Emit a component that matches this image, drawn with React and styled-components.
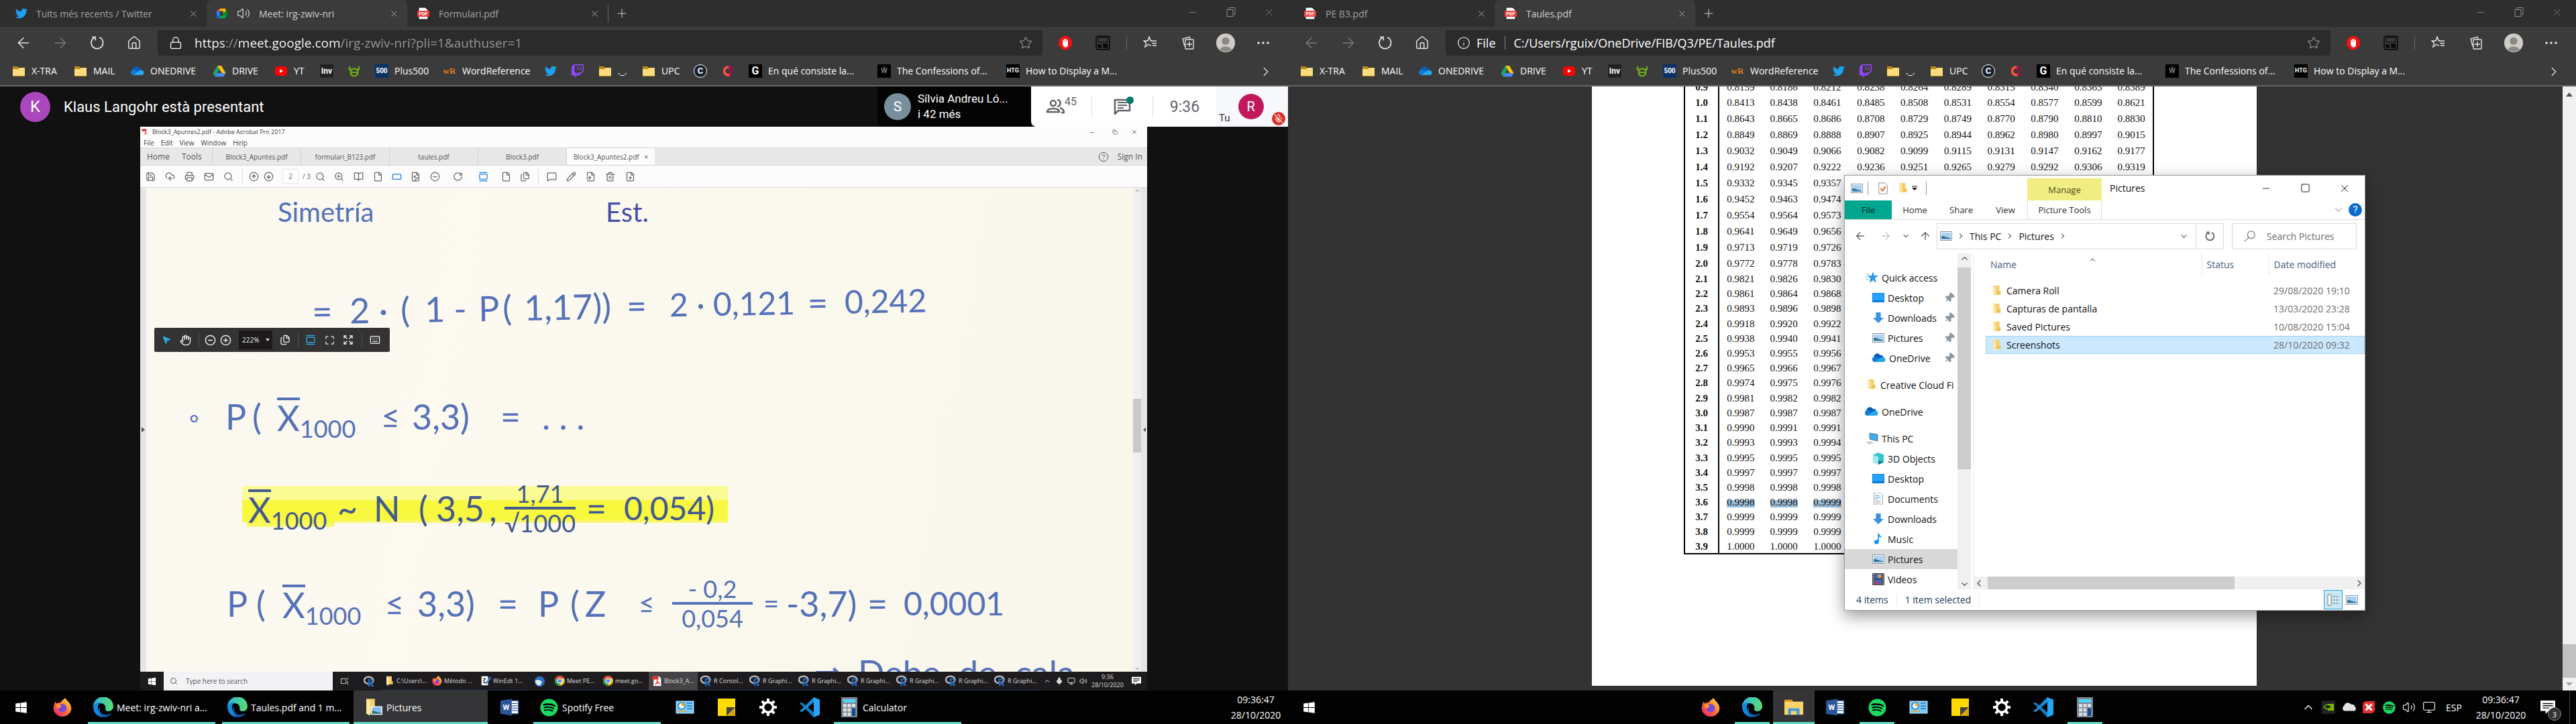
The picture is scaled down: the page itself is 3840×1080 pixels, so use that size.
import React from "react";
import styled, { createGlobalStyle, css } from "styled-components";
import {
  ArrowLeft, ArrowRight, ArrowUp, House, Lock, Star, Settings, Search, Volume2, Minus, X, Plus,
  Square, Copy, ChevronRight, ChevronDown, ChevronUp, ChevronLeft, Info, Pin, Monitor, Printer, Mail, Hand,
  Trash2, File, Maximize, MousePointer2, Mic, MicOff, MessageSquare, RotateCw, Save, CloudUpload,
  CircleArrowUp, CircleArrowDown, CirclePlus, CircleMinus, ZoomIn, Pencil, FileInput, FilePlus, BookOpen,
  Files, Expand, Keyboard, Ellipsis, GalleryVertical, RectangleHorizontal, FileImage, CircleHelp,
} from "lucide-react";
import { FaTwitter, FaTwitch, FaSpotify, FaWindows } from "react-icons/fa";

const ui = `"Open Sans", "Noto Sans", sans-serif`;
const meet = `Roboto, "Liberation Sans", sans-serif`;
const serif = `"Liberation Serif", serif`;
const pen = `Lato, "Open Sans", sans-serif`;

const Global = createGlobalStyle`
  *, *::before, *::after { box-sizing: border-box; }
  body { margin: 0; background: #000; font-family: ${ui}; }
  button, input, select { font: inherit; color: inherit; border: 0; background: none; padding: 0; margin: 0; outline: 0; }
  svg { display: block; flex: none; }
`;

/* ---------- icons ---------- */

const Svg = ({ w = 20, h = w, vb = "0 0 20 20", children }) => (
  <svg width={w} height={h} viewBox={vb} fill="none" aria-hidden="true">{children}</svg>
);

const FolderYellow = () => (
  <Svg>
    <path d="M1 3h7l2 2h9v13H1z" fill="#b98a12" />
    <path d="M1 7h8l2-2h8v12H1z" fill="#fedb7c" />
  </Svg>
);
const FolderTall = ({ s = 18 }) => (
  <Svg w={s}>
    <path d="M5 1h10v15H5z" fill="#f6cf69" />
    <path d="M5 1l4 3v15l-4-3z" fill="#ffe9a8" />
    <path d="M9 16h8V10h-2z" fill="#efc04a" />
  </Svg>
);
const OneDriveIcon = () => (
  <Svg>
    <path d="M3 11a5 5 0 0 1 9-5 4 4 0 0 1 5 4l-7 4z" fill="#0a5fb8" />
    <path d="M4 16a4 4 0 0 1 0-8c2 0 4 1 6 3l5 5z" fill="#1479d4" />
    <path d="M8 16l-4-.2 7-5.300A5 5 0 0 1 16 9a3.500 3.500 0 0 1 0 7z" fill="#29a6ea" />
  </Svg>
);
const DriveIcon = () => (
  <Svg>
    <path d="M7 2h6l6.500 11H13.500z" fill="#ffc107" />
    <path d="M7 2l3 5.200L3.500 18.500 .5 13z" fill="#1da362" />
    <path d="M6.500 13h13l-3 5.500h-13z" fill="#4688f4" />
  </Svg>
);
const YouTubeIcon = () => (
  <Svg>
    <rect x="1" y="3" width="18" height="14" rx="4" fill="#f00" />
    <path d="M8 7l5 3-5 3z" fill="#fff" />
  </Svg>
);
const MeetIcon = () => (
  <Svg w={18}>
    <path d="M6 2h9a1 1 0 0 1 1 1v4l-4 3V6H6z" fill="#ffba00" />
    <path d="M6 2v4H1z" fill="#e94235" />
    <path d="M1 6h5v8H1z" fill="#2684fc" />
    <path d="M1 14h5v4H2a1 1 0 0 1-1-1z" fill="#0066da" />
    <path d="M6 14h6v-4l4 3v4a1 1 0 0 1-1 1H6z" fill="#00ac47" />
    <path d="M12 10l7-6v12z" fill="#00832d" />
  </Svg>
);
const LetterBox = styled.span`
  display: grid;
  place-items: center;
  flex: none;
  width: ${(p) => p.$s || 20}px;
  height: ${(p) => p.$s || 20}px;
  border-radius: ${(p) => p.$r || 0}px;
  background: ${(p) => p.$bg || "transparent"};
  border: ${(p) => p.$bd || "0"};
  color: ${(p) => p.$fg || "#fff"};
  font: ${(p) => p.$w || 700} ${(p) => p.$fs || 12}px/1 ${(p) => p.$ff || meet};
`;
const PdfIcon = ({ s = 20 }) => (
  <Svg w={s} h={s}>
    <path d="M3 1h10l4 4v14H3z" fill="#fff" stroke="#111" />
    <rect x="1" y="6" width="18" height="9" rx="1" fill="#ee3e3e" />
    <text x="10" y="13" fill="#fff" fontFamily="Roboto, sans-serif" fontWeight="700" fontSize="7" textAnchor="middle">PDF</text>
  </Svg>
);
const AcrobatIcon = ({ s = 16 }) => (
  <Svg w={s} h={s}>
    <path d="M4 1h10l4 4v14H4z" fill="#fff" />
    <rect x="1" y="1" width="12" height="6" fill="#d8332a" />
    <path d="M10 8c1 4 3 6 6 7M11 8c0 4-2 7-4 9M8 14c2-1 5-1 7-1" stroke="#d8332a" strokeWidth="1.400" />
  </Svg>
);
const HornsIcon = () => (
  <Svg>
    <circle cx="10" cy="12" r="5.500" stroke="#6aa516" strokeWidth="2.500" />
    <path d="M5 12h10" stroke="#6aa516" strokeWidth="2" />
    <path d="M4 1c-4 4-3 8 1 9l1-3C4 6 3 4 4 1zM16 1c4 4 3 8-1 9l-1-3c2-1 3-3 2-6z" fill="#6aa516" />
  </Svg>
);
const RingC = () => (
  <Svg>
    <path d="M16 4a8 8 0 1 0 0 12l-3-3a4 4 0 1 1 0-6z" fill="#ff4f3c" />
    <path d="M10 2a8 8 0 0 1 7 3v9a8 8 0 0 1-5 4l1-5V7z" fill="#8d1248" />
  </Svg>
);
const BlockIcon = () => (
  <Svg w={20}>
    <path d="M6 0h8l6 6v8l-6 6H6l-6-6V6z" fill="#e11" />
    <path d="M6 9V5.500h1.600V9h.4V4h1.600v5h.4V4h1.600v5h.4V5.500H14V12c0 3-1 4.500-3.500 4.500S7 15 6 12z" fill="#fff" />
  </Svg>
);
const PipIcon = () => (
  <Svg w={22}>
    <rect x="1" y="1" width="18" height="18" rx="2" stroke="#0a0a0a" strokeWidth="1.500" />
    <rect x="4" y="3" width="12" height="6" stroke="#0a0a0a" />
    <rect x="3" y="12" width="5" height="5" fill="#0a0a0a" />
    <rect x="10" y="11" width="7" height="6" fill="#0a0a0a" />
  </Svg>
);
const FavIcon = () => (
  <Svg w={22} vb="0 0 22 22">
    <path d="M12 15.500L8 13l-5 4 1.500-6L1 8h6l2-6 2.500 6H20M13 11.500h7M14 15h6" stroke="#e8e8e8" strokeWidth="1.400" />
  </Svg>
);
const CollectionsIcon = () => (
  <Svg w={22} vb="0 0 22 22">
    <path d="M6 16l-3-11 10-3 1 3" stroke="#e8e8e8" strokeWidth="1.400" />
    <rect x="7" y="6" width="12" height="14" rx="1" stroke="#e8e8e8" strokeWidth="1.400" />
    <path d="M13 9v8M9 13h8" stroke="#e8e8e8" strokeWidth="1.400" />
  </Svg>
);
const ReloadIcon = ({ c = "#e8e8e8", s = 22, sw = 1.5 }) => (
  <Svg w={s}>
    <path d="M13 2.500a8 8 0 1 1-7 .3" stroke={c} strokeWidth={sw} />
    <path d="M3 2h4.500v4.500" stroke={c} strokeWidth={sw} />
  </Svg>
);
const PersonIcon = () => (
  <Svg w={28}>
    <circle cx="10" cy="10" r="10" fill="#d0cdc9" />
    <circle cx="10" cy="8" r="4" fill="#8d8883" />
    <path d="M3.500 17a7 5 0 0 1 13 0 10 10 0 0 1-13 0z" fill="#8d8883" />
  </Svg>
);
const EdgeIcon = ({ s = 30 }) => (
  <Svg w={s}>
    <defs>
      <linearGradient id="edgeTop" x1="0" x2="1"><stop stopColor="#2bb3e6" /><stop offset="1" stopColor="#5be06b" /></linearGradient>
      <linearGradient id="edgeLow" x1="0" y1="0" x2="0" y2="1"><stop stopColor="#1b8fe0" /><stop offset="1" stopColor="#0c4f9e" /></linearGradient>
    </defs>
    <path d="M0 10a10 10 0 0 1 20-1c0 3-2 5-5 5-2 0-3-1-3-2 1-3-1-6-5-6-4 0-6 2-7 4z" fill="url(#edgeTop)" />
    <path d="M0 10c0-3 3-5 7-5-2 2-3 4-2 8 1 4 4 6 7 6.700A10 10 0 0 1 0 10z" fill="#1488dd" />
    <path d="M7 9c-2 4 0 8 5 8.500 3 0 5-1 6.500-2A10 10 0 0 1 9 19.900C5 17 4 12 7 9z" fill="url(#edgeLow)" />
  </Svg>
);
const FirefoxIcon = ({ s = 28 }) => (
  <Svg w={s}>
    <defs><linearGradient id="fox" x1="1" y1="0" x2="0" y2="1"><stop stopColor="#fff44f" /><stop offset=".45" stopColor="#ff7a2a" /><stop offset="1" stopColor="#f0137a" /></linearGradient></defs>
    <path d="M13 0c1 3 6 5 6.500 11A9.500 9 0 0 1 .5 11C.5 8 2 6 2 4l2 2c1-1 3-1 4-1 1-2 3-3 5-5z" fill="url(#fox)" />
    <circle cx="10" cy="11" r="4.500" fill="#7a46e0" />
    <path d="M3 7c3-1 5 0 6 2l-4 3z" fill="#ff9a2c" />
  </Svg>
);
const WordIcon = () => (
  <Svg w={28}>
    <rect x="9" y="3" width="10" height="14" fill="#fff" stroke="#2b579a" />
    <path d="M12 6h6M12 8.500h6M12 11h6M12 13.500h6" stroke="#2b579a" />
    <path d="M0 3l12-2v18L0 17z" fill="#2b579a" />
    <text x="6" y="13" fill="#fff" fontFamily="Roboto, sans-serif" fontWeight="700" fontSize="8" textAnchor="middle">W</text>
  </Svg>
);
const PanelIcon = () => (
  <Svg w={28} h={20} vb="0 0 28 20">
    <rect x="1" y="1" width="26" height="18" fill="#7cc9f7" stroke="#b9e4ff" />
    <circle cx="9" cy="8" r="5" fill="#e8f6ff" stroke="#1b78c4" strokeWidth="1.500" />
    <path d="M9 8V3a5 5 0 0 1 5 5z" fill="#f6a623" />
    <path d="M17 4h8M17 8h8M17 12h8" stroke="#1b78c4" strokeWidth="1.500" />
    <path d="M4 16h12" stroke="#f6a623" strokeWidth="1.500" />
  </Svg>
);
const StickyIcon = () => (
  <Svg w={26}>
    <path d="M0 0h20v20H0z" fill="#ffd900" />
    <path d="M10 20V10h10z" fill="#444" />
    <path d="M11 20l9-10v10z" fill="#d9a400" />
  </Svg>
);
const GearIcon = () => (
  <Svg w={28} vb="-14 -14 28 28">
    <circle r="7.500" stroke="#fff" strokeWidth="3.500" />
    {[0, 45, 90, 135, 180, 225, 270, 315].map((a) => <rect key={a} x="-2" y="-13" width="4" height="5" fill="#fff" transform={`rotate(${a})`} />)}
  </Svg>
);
const CodeIcon = () => (
  <Svg w={30}>
    <path d="M14 0l6 2.500v15L14 20z" fill="#25a5f2" />
    <path d="M0 6.500L2 5l12 10v5L2 7.800z" fill="#1479c4" />
    <path d="M0 13.500L2 15 14 5V0L2 12.200z" fill="#1a8ad6" />
  </Svg>
);
const CalcIcon = () => (
  <Svg w={24} h={30} vb="0 0 24 30">
    <rect width="24" height="30" rx="1" fill="#7c8792" />
    <rect x="3" y="3" width="18" height="5" fill="#4fd4f7" />
    <path d="M3 10h5v5H3zM9.500 10h5v5h-5zM16 10h5v5h-5zM3 16.500h5v5H3zM9.500 16.500h5v5h-5zM3 23h5v5H3zM9.500 23h5v5h-5z" fill="#d9dee3" />
    <path d="M16 16.500h5V28h-5z" fill="#0f4c93" />
  </Svg>
);
const ExplorerIcon = () => (
  <Svg w={28}>
    <path d="M0 2h8l2 3H0z" fill="#dd9a14" />
    <path d="M0 4h20v14H0z" fill="#fbd36a" />
    <path d="M4 18v-7h12v7h-3v-4H7v4z" fill="#3f9ade" />
  </Svg>
);
const PhotoIcon = ({ w = 18, h = 14 }) => (
  <Svg w={w} h={h} vb="0 0 18 14">
    <rect x=".5" y=".5" width="17" height="13" fill="#fff" stroke="#8d9499" />
    <path d="M2 2h14v10H2z" fill="#a9d0f5" />
    <path d="M2 7c5 0 8 3 14 3v2H2z" fill="#2e6f71" />
    <path d="M2 10h14v2H2z" fill="#4a8fd0" />
  </Svg>
);
const FolderPhotoIcon = () => (
  <Svg w={28}>
    <path d="M3 1h9v16H3z" fill="#f6cf69" /><path d="M3 1l4 2v16l-4-2z" fill="#ffe9a8" />
    <rect x="8" y="9" width="12" height="9" fill="#fff" /><path d="M9 10h10v7H9z" fill="#7dbcf0" /><path d="M9 14c4 0 6 2 10 2v1H9z" fill="#2e6f71" />
  </Svg>
);
const QuickStar = () => (
  <Svg w={20}>
    <path d="M12 1l2 6h6l-5 4 2 7-5-4-5 4 1-7-4-4h6z" fill="#2f9be8" />
    <path d="M1 5h6M0 9h5M1 13h5" stroke="#7cc4f5" />
  </Svg>
);
const DesktopIcon = () => <Svg w={18} h={14} vb="0 0 18 14"><rect width="18" height="14" fill="#0a7bd6" /><rect x="1" y="1" width="16" height="10" fill="#27a3ff" /></Svg>;
const DownIcon = () => <Svg w={18}><path d="M6 1h8v9h5l-9 9-9-9h5z" fill="#3a93e2" /></Svg>;
const PcIcon = () => <Svg w={20}><path d="M7 2l12 2v10L7 11z" fill="#3faaf0" stroke="#6b7a85" /><path d="M1 15l8-1 4 3-7 2z" fill="#c9d1d8" /></Svg>;
const CubeIcon = () => <Svg w={18}><path d="M10 0l9 4v12l-9 4-9-4V4z" fill="#37c2cf" /><path d="M1 4l9 3v13l-9-4z" fill="#a5e8ee" /><path d="M10 13l9 3-9 4z" fill="#117c8a" /></Svg>;
const DocIcon = () => <Svg w={18}><path d="M3 0h10l4 4v16H3z" fill="#fff" stroke="#8d9499" /><path d="M5 5h6M5 8h9M5 11h4" stroke="#1f8fe0" /><path d="M5 14h9M5 17h9" stroke="#999" /></Svg>;
const EditDocIcon = () => <Svg w={15}><path d="M1 1h13v18H1z" fill="#fff" /><path d="M4 6h5l-4 4 4 4H4" stroke="#333" strokeWidth="1.500" /><path d="M18 2l-8 11-1 4 4-2 7-11z" fill="#3b8fe0" /></Svg>;
const MusicIcon = () => <Svg w={18}><path d="M10 0c1 4 6 4 5 9-1-2-2-3-4-3v9a4 3.500 0 1 1-2-3V0z" fill="#1597ee" /></Svg>;
const VideoIcon = () => <Svg w={18}><path d="M0 0h20v20H0z" fill="#444" /><path d="M4 1h12v8H4z" fill="#3d67c9" /><path d="M4 11h12v8H4z" fill="#3d67c9" /><circle cx="12" cy="5" r="3" fill="#e9a523" /><path d="M5 15h6v4H5z" fill="#d34" /><path d="M2 1v18M18 1v18" stroke="#ddd" strokeDasharray="2 2" strokeWidth="1.500" /></Svg>;
const ChromeIcon = () => <Svg w={15}><circle cx="10" cy="10" r="10" fill="#f3c02b" /><path d="M1.300 5A10 10 0 0 1 18.700 5L10 6 6 12z" fill="#dd4b3e" /><path d="M1.300 5A10 10 0 0 0 9 20l4-7-7-1z" fill="#2ba24c" /><circle cx="10" cy="10" r="4.500" fill="#4a8af4" stroke="#fff" strokeWidth="1.500" /></Svg>;
const RIcon = () => <Svg w={17}><ellipse cx="9" cy="8" rx="8" ry="6" stroke="#b5b9c0" strokeWidth="3" /><path d="M8 6h6a3.500 3.500 0 0 1 1 6.500L18 19h-4l-2.500-5H11v5H8zM11 8.500V12h3a1.700 1.700 0 0 0 0-3.500z" fill="#2066b8" /></Svg>;
const BirdIcon = () => <Svg w={17}><circle cx="10" cy="10" r="9" fill="#2c6fc9" /><path d="M2 9c5-3 9-2 12 2l-3 6c-5 1-8-3-9-8z" fill="#dfe9f5" /></Svg>;
const NoteIcon = ({ s = 22 }) => <Svg w={s}><path d="M0 1h20v14H11l-4 4v-4H0z" fill="#fff" /><path d="M3 5h14M3 8h14M3 11h9" stroke="#111" strokeWidth="1.300" /></Svg>;
const NvidiaIcon = () => <Svg w={20}><rect width="20" height="20" fill="#222" /><path d="M3 10c3-5 9-5 12-1-3 4-8 5-12 1z" stroke="#76b900" strokeWidth="1.500" /><path d="M9 5h9v10H9v-2c3 0 4-1 6-3-2-2-3-3-6-3z" fill="#76b900" /></Svg>;
const CloudIcon = () => <Svg w={22}><path d="M4 15a4 4 0 0 1 0-7 5 5 0 0 1 9-2 5 5 0 0 1 6 4 3 3 0 0 1-1 5z" fill="#e4e4e4" /></Svg>;
const RedXIcon = () => <Svg w={18}><path d="M4 0h16v16l-4 4H0V4z" fill="#e02f2f" /><path d="M5 5l10 10M15 5L5 15" stroke="#fff" strokeWidth="3.500" /></Svg>;
const PeopleIcon = () => (
  <Svg w={28} h={22} vb="0 0 28 22">
    <circle cx="11" cy="6" r="4" stroke="#5f6368" strokeWidth="2.500" /><path d="M2 19c0-4 4-5 9-5s9 1 9 5z" stroke="#5f6368" strokeWidth="2.500" />
    <path d="M17 1c6 0 6 9 0 10M21 13c4 1 6 3 6 7h-4" stroke="#5f6368" strokeWidth="2.500" />
  </Svg>
);
const ChatIcon = () => <Svg w={26} h={24} vb="0 0 26 24"><path d="M2 2h22v16H7l-5 5z" stroke="#5f6368" strokeWidth="2.500" /><path d="M6 6h14M6 10h14M6 14h9" stroke="#5f6368" strokeWidth="2" /></Svg>;

/* ---------- browser chrome ---------- */

const Desktop = styled.main`
  display: grid;
  grid-template-columns: 1fr 1fr;
  min-height: 100vh;
`;
const Screen = styled.section`
  position: relative;
  display: flex;
  flex-direction: column;
  min-width: 0;
  height: 100vh;
`;
const Browser = styled.div`
  display: flex;
  flex-direction: column;
  flex: 1;
  min-height: 0;
`;
const TabStrip = styled.div`
  display: flex;
  align-items: center;
  height: 40px;
  padding-left: 9px;
  background: #2e2e2e;
`;
const Tab = styled.div`
  display: flex;
  align-items: center;
  gap: 13px;
  width: 299px;
  height: 40px;
  padding: 0 10px 0 14px;
  color: ${(p) => (p.$active ? "#cfcfcf" : "#a3a3a3")};
  background: ${(p) => (p.$active ? "#3b3b3b" : "none")};
  border-radius: 8px 8px 0 0;
  font-size: 14px;
`;
const Grow = styled.span`
  flex: 1;
  min-width: 0;
  white-space: nowrap;
`;
const IconButton = styled.button`
  display: grid;
  place-items: center;
  width: ${(p) => p.$w || 20}px;
  height: ${(p) => p.$h || 20}px;
  color: ${(p) => p.$c || "#b0b0b0"};
  flex: none;
`;
const Controls = styled.div`
  display: flex;
  align-self: ${(p) => (p.$top ? "flex-start" : "auto")};
  margin-left: auto;
`;
const Toolbar = styled.div`
  display: flex;
  align-items: center;
  height: 48px;
  padding: 0 9px 0 7px;
  background: #3b3b3b;
`;
const Address = styled.label`
  display: flex;
  align-items: center;
  flex: 1;
  gap: ${(p) => p.$gap}px;
  height: 38px;
  margin: 0 6px 0 8px;
  padding: 0 15px 0 17px;
  border-radius: 4px;
  background: #2b2b2b;
  color: #fff;
  font-size: ${(p) => p.$fs}px;
`;
const UrlInput = styled.input`
  flex: 1;
  min-width: 0;
  color: #fff;
  ${(p) => p.$tinted && css`
    color: transparent;
    background: linear-gradient(90deg, #fff 46px, #999 46px 65px, #fff 65px 218px, #999 218px);
    -webkit-background-clip: text;
    background-clip: text;
  `}
`;
const Divider = styled.span`
  width: ${(p) => p.$w || 1}px;
  height: ${(p) => p.$h || 20}px;
  flex: none;
  background: linear-gradient(${(p) => p.$c || "#666"}, ${(p) => p.$c || "#666"}) center / 1px 100% no-repeat;
`;
const Bookmarks = styled.nav`
  display: flex;
  align-items: center;
  gap: 21px;
  height: 41px;
  padding: 0 24px 4px 18px;
  background: #3b3b3b;
  border-bottom: 2px solid #666;
  color: #fff;
  font-size: 14px;
`;
const Bookmark = styled.a`
  display: flex;
  align-items: center;
  gap: 9px;
  color: inherit;
  text-decoration: none;
  white-space: nowrap;
`;
const BookmarkText = styled.span`
  width: ${(p) => p.$w}px;
`;

const bookmarks = [
  [<FolderYellow />, "X-TRA", 42], [<FolderYellow />, "MAIL", 35], [<OneDriveIcon />, "ONEDRIVE", 72], [<DriveIcon />, "DRIVE", 42],
  [<YouTubeIcon />, "YT", 18], [<LetterBox $bg="#222" $fs={12}>Inv</LetterBox>], [<HornsIcon />],
  [<LetterBox $bg="#0b3266" $fs={10}>500</LetterBox>, "Plus500", 51],
  [<LetterBox $fs={13} $fg="#e07a1f" $ff={serif}>wR</LetterBox>, "WordReference", 102],
  [<FaTwitter size={18} color="#1da1f2" />], [<FaTwitch size={20} color="#9146ff" />], [<FolderYellow />, "._.", 15], [<FolderYellow />, "UPC", 27],
  [<LetterBox $bg="#16202e" $r={10} $bd="1px solid #fff" $fs={13}>C</LetterBox>], [<RingC />],
  [<LetterBox $bg="#000" $fs={16}>G</LetterBox>, "En qué consiste la...", 142],
  [<LetterBox $bg="#000" $fg="#777" $fs={11}>Ŵ</LetterBox>, "The Confessions of...", 142],
  [<LetterBox $bg="#000" $fs={9}>HTG</LetterBox>, "How to Display a M...", 142],
];

function Chrome({ tabs, address, back, trailing, children }) {
  return (
    <Browser>
      <TabStrip>
        {tabs.map((t) => (
          <Tab key={t.title} $active={t.active}>
            {t.icon}
            {t.sound && <Volume2 size={20} strokeWidth={1.5} />}
            <Grow>{t.title}</Grow>
            <IconButton aria-label="Close tab"><X size={15} strokeWidth={1.5} /></IconButton>
          </Tab>
        ))}
        {trailing && <Divider $h={26} />}
        <IconButton $w={39} $h={40} aria-label="New tab"><Plus size={20} strokeWidth={1.5} /></IconButton>
        <Controls $top>
          <IconButton $w={57} $h={36} $c="#8a8a8a" aria-label="Minimise"><Minus size={15} strokeWidth={1.5} /></IconButton>
          <IconButton $w={57} $h={36} $c="#8a8a8a" aria-label="Restore"><Svg w={14} vb="0 0 14 14"><path d="M1 3.500h9v10H1zM4 3.500V.5h9v10h-3" stroke="currentColor" /></Svg></IconButton>
          <IconButton $w={57} $h={36} $c="#8a8a8a" aria-label="Close"><X size={17} strokeWidth={1.2} /></IconButton>
        </Controls>
      </TabStrip>
      <Toolbar>
        <IconButton $w={55} $h={40} $c={back ? "#e8e8e8" : "#7a7a7a"} aria-label="Back"><ArrowLeft size={26} strokeWidth={1.3} /></IconButton>
        <IconButton $w={55} $h={40} $c="#7a7a7a" aria-label="Forward"><ArrowRight size={26} strokeWidth={1.3} /></IconButton>
        <IconButton $w={55} $h={40} aria-label="Reload"><ReloadIcon /></IconButton>
        <IconButton $w={55} $h={40} $c="#e8e8e8" aria-label="Home"><House size={22} strokeWidth={1.5} /></IconButton>
        {address}
        <IconButton $w={56} $h={40} aria-label="Blocker"><BlockIcon /></IconButton>
        <IconButton $w={56} $h={40} aria-label="Picture in picture"><PipIcon /></IconButton>
        <Divider $w={15} />
        <IconButton $w={56} $h={40} aria-label="Favourites"><FavIcon /></IconButton>
        <IconButton $w={56} $h={40} aria-label="Collections"><CollectionsIcon /></IconButton>
        <IconButton $w={56} $h={40} aria-label="Profile"><PersonIcon /></IconButton>
        <IconButton $w={56} $h={40} $c="#e8e8e8" aria-label="More"><Ellipsis size={24} strokeWidth={1.5} /></IconButton>
      </Toolbar>
      <Bookmarks>
        {bookmarks.map(([icon, text, w], i) => (
          <Bookmark key={i} href="#" aria-label={text || "Bookmark"}>{icon}{text && <BookmarkText $w={w}>{text}</BookmarkText>}</Bookmark>
        ))}
        <Controls><IconButton $c="#e8e8e8" aria-label="More bookmarks"><ChevronRight size={22} strokeWidth={1.3} /></IconButton></Controls>
      </Bookmarks>
      {children}
    </Browser>
  );
}

/* ---------- Meet call ---------- */

const Call = styled.div`
  display: flex;
  flex-direction: column;
  flex: 1;
  min-height: 0;
  background: #111;
  font-family: ${meet};
`;
const CallHeader = styled.header`
  display: flex;
  align-items: stretch;
  height: 60px;
  color: #fff;
`;
const Presenter = styled.div`
  display: flex;
  align-items: center;
  gap: 20px;
  flex: 1;
  padding-left: 30px;
  font-size: 22px;
`;
const People = styled.div`
  display: flex;
  align-items: center;
  gap: 10px;
  width: 229px;
  padding-left: 10px;
  background: #040404;
  border-radius: 0 0 0 8px;
  font-size: 17px;
  line-height: 23px;
`;
const CallTools = styled.div`
  display: flex;
  align-items: center;
  width: 383px;
  background: #fff;
  border-radius: 0 0 0 8px;
  color: #5f6368;
`;
const CallTool = styled.button`
  position: relative;
  display: flex;
  align-items: center;
  justify-content: center;
  width: ${(p) => p.$w}px;
  height: 60px;
  font-size: ${(p) => p.$fs || 16}px;
`;
const Count = styled.sup`
  align-self: flex-start;
  padding-top: 14px;
  font-size: 16px;
  line-height: 18px;
`;
const ChatDot = styled.span`
  position: absolute;
  top: 15px;
  right: 28px;
  width: 11px;
  height: 11px;
  border-radius: 50%;
  background: #00796b;
`;
const Self = styled.div`
  display: flex;
  align-items: center;
  justify-content: space-between;
  flex: 1;
  height: 60px;
  padding: 0 4px;
  background: #f6f8fb;
  color: #333;
  font-size: 15px;
`;
const SelfName = styled.span`
  align-self: flex-end;
  padding-bottom: 4px;
`;
const SelfMic = styled.span`
  display: grid;
  place-items: center;
  align-self: flex-end;
  width: 20px;
  height: 20px;
  margin-bottom: 2px;
  border-radius: 50%;
  background: #d93025;
  color: #fff;
`;
const Shared = styled.div`
  display: flex;
  flex-direction: column;
  flex: 1;
  min-height: 0;
  margin: 0 210px 0 209px;
  background: #fdfcfd;
  color: #444;
  font: 10px/14px ${ui};
`;
const AcroTitle = styled.div`
  display: flex;
  align-items: center;
  gap: 5px;
  height: 16px;
  padding: 0 9px 0 2px;
  font-size: 9px;
`;
const AcroMenu = styled.div`
  display: flex;
  gap: 10px;
  height: 15px;
  padding-left: 5px;
`;
const PlainButton = styled.button`
  white-space: nowrap;
`;
const AcroTabs = styled.div`
  display: flex;
  height: 27px;
  background: #e9e8e9;
  border-top: 1px solid #d8d6d8;
  border-bottom: 1px solid #d8d6d8;
  color: #555;
`;
const AcroHome = styled.div`
  display: flex;
  align-items: center;
  gap: 18px;
  width: 107px;
  padding-left: 10px;
  font-size: 12px;
`;
const AcroTab = styled.button`
  width: 132px;
  border-left: 1px solid #d2d0d2;
  background: ${(p) => (p.$active ? "#fdfcfd" : "none")};
`;
const AcroRight = styled.div`
  display: flex;
  align-items: center;
  gap: 13px;
  margin-left: auto;
  padding-right: 7px;
  font-size: 12px;
`;
const AcroTools = styled.div`
  display: flex;
  align-items: center;
  height: 33px;
  padding-left: 1px;
  border-bottom: 1px solid #dcdadc;
  color: #666;
`;
const PageBox = styled.input`
  width: 24px;
  height: 22px;
  margin: 0 6px 0 10px;
  text-align: center;
  background: #fff;
  border: 1px solid #e6e6e6;
`;
const AcroBody = styled.div`
  display: flex;
  flex: 1;
  min-height: 0;
`;
const Gutter = styled.div`
  display: grid;
  place-items: center;
  width: 9px;
  background: #e7e5e8;
`;
const Paper = styled.div`
  position: relative;
  flex: 1;
  overflow: hidden;
  background: linear-gradient(100deg, #f9f8ef 0%, #fcf9f0 30%, #fbf9ee 60%, #f9f6ea 100%);
  color: #5571b8;
  font-family: ${pen};
`;
const Line = styled.p`
  display: flex;
  align-items: center;
  height: ${(p) => p.$h}px;
  margin: 0;
  padding-left: ${(p) => p.$x}px;
  font-size: 52px;
  line-height: 60px;
  white-space: nowrap;
  ${(p) => p.$tilt && css`transform: rotate(-1deg);`}
  ${(p) => p.$marked && css`
    color: #43598f;
    background:
      linear-gradient(#f9f93f, #f9f96a) 150px 90px / 130px 12px no-repeat,
      linear-gradient(transparent 41px, #fbfb94 41px 60px, #f8f83e 64px 90px, #f9f98a 96px, transparent 96px) 143px 0 / 724px 100% no-repeat;
  `}
`;
const Word = styled.span`
  width: ${(p) => p.$w}px;
  font-size: ${(p) => p.$fs || 52}px;
  color: ${(p) => p.$c || "inherit"};
`;
const Bar = styled.span`
  border-top: 4px solid;
`;
const Mean = styled.span`
  display: flex;
  width: ${(p) => p.$w}px;
  line-height: 52px;
`;
const Low = styled.sub`
  align-self: flex-end;
  font-size: 36px;
  line-height: 20px;
`;
const Fraction = styled.span`
  display: flex;
  flex-direction: column;
  align-items: center;
  width: ${(p) => p.$w}px;
  margin-right: ${(p) => p.$gap}px;
  font-size: 36px;
  line-height: 40px;
`;
const Under = styled.span`
  width: 100%;
  border-top: 4px solid;
  text-align: center;
`;
const ZoomBar = styled.div`
  position: absolute;
  top: 209px;
  left: 12px;
  display: flex;
  align-items: center;
  width: 351px;
  height: 36px;
  padding-left: 4px;
  border-radius: 2px;
  background: #343233;
  color: #eee;
  font: 10px/14px ${ui};
`;
const ZoomPick = styled.label`
  display: flex;
  align-items: center;
  justify-content: space-between;
  width: 50px;
  height: 28px;
  margin: 0 5px 0 9px;
  padding: 0 4px 0 5px;
  background: #1c1a1b;
`;
const ZoomSelect = styled.select`
  appearance: none;
  width: 30px;
`;
const Scroll = styled.div`
  display: flex;
  flex-direction: ${(p) => (p.$row ? "row" : "column")};
  align-items: center;
  ${(p) => (p.$row ? "height" : "width")}: ${(p) => p.$s}px;
  background: ${(p) => p.$bg || "#f0f0f0"};
  color: #505050;
  flex: none;
`;
const Thumb = styled.span`
  background: ${(p) => p.$c || "#cdcdcd"};
  ${(p) => (p.$row ? "height" : "width")}: 100%;
  ${(p) => (p.$row ? "width" : "height")}: ${(p) => p.$len}px;
  ${(p) => (p.$row ? "margin-right" : "margin-bottom")}: auto;
  ${(p) => (p.$row ? "margin-left" : "margin-top")}: ${(p) => p.$at}px;
`;
const InnerBar = styled.div`
  display: flex;
  align-items: center;
  height: 28px;
  background: #1d1b1e;
  color: #ddd;
  font: 9px/12px ${ui};
`;
const InnerSearch = styled.label`
  display: flex;
  align-items: center;
  gap: 12px;
  width: 252px;
  height: 28px;
  padding-left: 9px;
  flex: none;
  background: #f3f2f5;
  color: #555;
  font-size: 10px;
  input { width: 200px; }
  input::placeholder { color: #555; opacity: 1; }
`;
const InnerTask = styled.button`
  display: flex;
  align-items: center;
  gap: 3px;
  width: ${(p) => p.$w || 72}px;
  height: 28px;
  padding-left: 4px;
  flex: none;
  white-space: nowrap;
  background: ${(p) => (p.$active ? "#454346" : "none")};
  border-bottom: 1px solid ${(p) => (p.$active ? "#454346" : "#1f3a5c")};
`;
const InnerClock = styled.div`
  width: 54px;
  flex: none;
  text-align: center;
`;

const acroTools = [
  [Save, 29], [CloudUpload, 29], [Printer, 29], [Mail, 29], [Search, 29], null, [CircleArrowUp, 22], [CircleArrowDown, 22], "page",
  [Search, 29], [ZoomIn, 28], [BookOpen, 29], [File, 29], [RectangleHorizontal, 28, 1], [FileImage, 28], [CircleMinus, 30], [RotateCw, 38],
  [GalleryVertical, 38, 1], [File, 29], [Files, 28], null, [MessageSquare, 28], [Pencil, 29], [FileInput, 29], [Trash2, 30], [FilePlus, 30],
];

function SharedScreen() {
  return (
    <Shared>
      <AcroTitle>
        <AcrobatIcon s={11} /><Grow>Block3_Apuntes2.pdf - Adobe Acrobat Pro 2017</Grow>
        <IconButton $w={29} $h={14} $c="#555" aria-label="Minimise"><Minus size={9} /></IconButton>
        <IconButton $w={29} $h={14} $c="#555" aria-label="Restore"><Copy size={8} /></IconButton>
        <IconButton $w={20} $h={14} $c="#555" aria-label="Close"><X size={10} /></IconButton>
      </AcroTitle>
      <AcroMenu>{["File", "Edit", "View", "Window", "Help"].map((m) => <PlainButton key={m}>{m}</PlainButton>)}</AcroMenu>
      <AcroTabs>
        <AcroHome><PlainButton>Home</PlainButton><PlainButton>Tools</PlainButton></AcroHome>
        {["Block3_Apuntes.pdf", "formulari_B123.pdf", "taules.pdf", "Block3.pdf"].map((t) => <AcroTab key={t}>{t}</AcroTab>)}
        <AcroTab $active>Block3_Apuntes2.pdf &nbsp; ×</AcroTab>
        <AcroRight><CircleHelp size={16} strokeWidth={1.5} /><PlainButton>Sign In</PlainButton></AcroRight>
      </AcroTabs>
      <AcroTools>
        {acroTools.map((t, i) => {
          if (!t) return <Divider key={i} $w={12} $h={22} $c="#ddd" />;
          if (t === "page") return <React.Fragment key={i}><PageBox aria-label="Page" defaultValue="2" /><span>/ 3</span></React.Fragment>;
          const [I, w, blue] = t;
          return <IconButton key={i} $w={w} $h={24} $c={blue ? "#1c7fd6" : "#666"} aria-label="Tool"><I size={15} strokeWidth={2} /></IconButton>;
        })}
      </AcroTools>
      <AcroBody>
        <Gutter><Svg w={5} h={8} vb="0 0 5 8"><path d="M0 0l5 4-5 4z" fill="#555" /></Svg></Gutter>
        <Paper>
          <Line $h={72} $x={196}><Word $w={489} $fs={40}>Simetría</Word><Word $w={80} $fs={40} $c="#4b4ea8">Est.</Word></Line>
          <Line $h={206} $x={247} $tilt>
            <Word $w={56}>=</Word><Word $w={76}>2 ·</Word><Word $w={36}>(</Word><Word $w={80}>1 -</Word><Word $w={36}>P</Word><Word $w={32}>(</Word><Word $w={153}>1,17))</Word><Word $w={64}>=</Word>
            <Word $w={206} $fs={48}>2 · 0,121</Word><Word $w={55}>=</Word><Word $w={140} $fs={48}>0,242</Word>
          </Line>
          <Line $h={126} $x={60}>
            <Word $w={58} $fs={36}>∘</Word><Word $w={40}>P</Word><Word $w={37}>(</Word><Mean $w={155}><Bar>X</Bar><Low>1000</Low></Mean><Word $w={46} $fs={48}>≤</Word>
            <Word $w={132}>3,3)</Word><Word $w={62}>=</Word><Word $w={90}>. . .</Word>
          </Line>
          <Line $h={148} $x={152} $marked>
            <Mean $w={133}><Bar>X</Bar><Low>1000</Low></Mean><Word $w={54}>~</Word><Word $w={67}>N</Word><Word $w={26}>(</Word><Word $w={79}>3,5</Word><Word $w={23}>,</Word>
            <Fraction $w={106} $gap={16}><span>1,71</span><Under>√1000</Under></Fraction><Word $w={56}>=</Word><Word $w={150} $fs={48}>0,054)</Word>
          </Line>
          <Line $h={136} $x={120}>
            <Word $w={44}>P</Word><Word $w={39}>(</Word><Mean $w={153}><Bar>X</Bar><Low>1000</Low></Mean><Word $w={48} $fs={48}>≤</Word><Word $w={120}>3,3)</Word><Word $w={60}>=</Word>
            <Word $w={48}>P</Word><Word $w={22}>(</Word><Word $w={80}>Z</Word><Word $w={50} $fs={40}>≤</Word>
            <Fraction $w={120} $gap={16}><span>- 0,2</span><Under>0,054</Under></Fraction>
            <Word $w={34} $fs={40}>=</Word><Word $w={121}>-3,7)</Word><Word $w={54}>=</Word><Word $w={150} $fs={48}>0,0001</Word>
          </Line>
          <Line $h={70} $x={995}><Word $w={66}>⇒</Word><Word $w={150}>Debe</Word><Word $w={84}>de</Word><Word $w={90}>cala</Word></Line>
          <ZoomBar>
            <IconButton $w={28} $c="#29abe8" aria-label="Select"><MousePointer2 size={14} fill="currentColor" /></IconButton>
            <IconButton $w={28} $c="#eee" aria-label="Pan"><Hand size={17} /></IconButton>
            <Divider $w={12} $c="#555" />
            <IconButton $w={23} $c="#eee" aria-label="Zoom out"><CircleMinus size={17} /></IconButton>
            <IconButton $w={22} $c="#eee" aria-label="Zoom in"><CirclePlus size={17} /></IconButton>
            <ZoomPick>
              <ZoomSelect aria-label="Zoom"><option>222%</option></ZoomSelect>
              <Svg w={6} h={4} vb="0 0 6 4"><path d="M0 0h6L3 4z" fill="#ddd" /></Svg>
            </ZoomPick>
            <IconButton $w={28} $c="#eee" aria-label="Copy"><Files size={16} /></IconButton>
            <Divider $w={10} $c="#555" />
            <IconButton $w={28} $c="#29abe8" aria-label="Fit width"><GalleryVertical size={16} /></IconButton>
            <IconButton $w={28} $c="#eee" aria-label="Fit page"><Maximize size={15} /></IconButton>
            <IconButton $w={28} $c="#eee" aria-label="Full screen"><Expand size={16} /></IconButton>
            <Divider $w={12} $c="#555" />
            <IconButton $w={28} $c="#eee" aria-label="Dock"><Keyboard size={16} /></IconButton>
          </ZoomBar>
        </Paper>
        <Scroll $s={12} $bg="#f1eff1"><ChevronUp size={9} /><Thumb $len={80} $at={306} $c="#cac8ca" /><ChevronDown size={9} /></Scroll>
        <Gutter><Svg w={4} h={8} vb="0 0 5 8"><path d="M5 0L0 4l5 4z" fill="#555" /></Svg></Gutter>
      </AcroBody>
      <InnerBar>
        <IconButton $w={35} $h={28} $c="#fff" aria-label="Start"><FaWindows size={13} /></IconButton>
        <InnerSearch><Search size={12} /><input aria-label="Search" placeholder="Type here to search" /></InnerSearch>
        <IconButton $w={36} $h={28} $c="#ddd" aria-label="Task view"><Svg w={12}><path d="M1 4h12v12H1zM17 1v6M17 10v9" stroke="#ddd" strokeWidth="1.500" /></Svg></IconButton>
        <IconButton $w={36} $h={28} aria-label="R"><RIcon /></IconButton>
        <InnerTask><FolderTall s={16} />C:\Users\...</InnerTask>
        <InnerTask $w={73}><FirefoxIcon s={15} />Método ...</InnerTask>
        <InnerTask $w={73}><EditDocIcon />WinEdt 1...</InnerTask>
        <IconButton $w={37} $h={28} aria-label="Mail"><BirdIcon /></IconButton>
        <InnerTask><ChromeIcon />Meet PE...</InnerTask>
        <InnerTask><ChromeIcon />meet.go...</InnerTask>
        <InnerTask $active $w={73}><AcrobatIcon />Block3_A...</InnerTask>
        <InnerTask $w={73}><RIcon />R Consol...</InnerTask>
        {[1, 2, 3, 4, 5, 6].map((n) => <InnerTask key={n} $w={73}><RIcon />R Graphi...</InnerTask>)}
        <Controls>
          <IconButton $w={18} $c="#ddd" aria-label="Hidden icons"><ChevronUp size={12} /></IconButton>
          <IconButton $w={18} $c="#ddd" aria-label="Microphone"><Mic size={12} fill="#ddd" /></IconButton>
          <IconButton $w={18} $c="#ddd" aria-label="Network"><Monitor size={12} /></IconButton>
          <IconButton $w={18} $c="#ddd" aria-label="Volume"><Volume2 size={12} /></IconButton>
        </Controls>
        <InnerClock>9:36<br />28/10/2020</InnerClock>
        <IconButton $w={32} $h={28} aria-label="Notifications"><NoteIcon s={14} /></IconButton>
      </InnerBar>
    </Shared>
  );
}

/* ---------- PDF page ---------- */

const Viewer = styled.div`
  display: flex;
  flex: 1;
  min-height: 0;
  background: #333;
`;
const SheetArea = styled.div`
  display: flex;
  flex: 1;
  padding: 0 456px 7px 453px;
  overflow: hidden;
`;
const Sheet = styled.div`
  flex: 1;
  padding-left: 137px;
  overflow: hidden;
  background: #fff;
`;
const Values = styled.table`
  width: 701px;
  margin-top: -13px;
  border-collapse: collapse;
  table-layout: fixed;
  border: 2px solid #000;
  color: #111;
  font: 15px/20px ${serif};
  text-align: center;
  th { width: 51px; border-right: 2px solid #000; padding: 0; }
  td { padding: 0; }
`;
const ValueRow = styled.tr`
  height: ${(p) => p.$h}px;
`;
const Marked = styled.mark`
  color: inherit;
  background: linear-gradient(transparent 5px, #99bedb 5px);
`;

const full = [
  ["0.9", "8159 8186 8212 8238 8264 8289 8315 8340 8365 8389"],
  ["1.0", "8413 8438 8461 8485 8508 8531 8554 8577 8599 8621"],
  ["1.1", "8643 8665 8686 8708 8729 8749 8770 8790 8810 8830"],
  ["1.2", "8849 8869 8888 8907 8925 8944 8962 8980 8997 9015"],
  ["1.3", "9032 9049 9066 9082 9099 9115 9131 9147 9162 9177"],
  ["1.4", "9192 9207 9222 9236 9251 9265 9279 9292 9306 9319"],
  ["1.5", "9332 9345 9357"], ["1.6", "9452 9463 9474"], ["1.7", "9554 9564 9573"], ["1.8", "9641 9649 9656"],
  ["1.9", "9713 9719 9726"], ["2.0", "9772 9778 9783"], ["2.1", "9821 9826 9830", 22], ["2.2", "9861 9864 9868", 22],
  ["2.3", "9893 9896 9898", 22], ["2.4", "9918 9920 9922", 23], ["2.5", "9938 9940 9941", 22], ["2.6", "9953 9955 9956", 22],
  ["2.7", "9965 9966 9967", 22], ["2.8", "9974 9975 9976", 22], ["2.9", "9981 9982 9982", 23], ["3.0", "9987 9987 9987", 22],
  ["3.1", "9990 9991 9991", 22], ["3.2", "9993 9993 9994", 22], ["3.3", "9995 9995 9995", 23], ["3.4", "9997 9997 9997", 22],
  ["3.5", "9998 9998 9998", 22], ["3.6", "9998 9998 9999", 22], ["3.7", "9999 9999 9999", 22], ["3.8", "9999 9999 9999", 22],
  ["3.9", "1 1 1", 22],
];

const PdfPage = () => (
  <Viewer>
    <SheetArea>
      <Sheet>
        <Values>
          <tbody>
            {full.map(([z, vals, h = 24]) => {
              const cells = vals.split(" ");
              return (
                <ValueRow key={z} $h={h}>
                  <th scope="row">{z}</th>
                  {cells.map((v, i) => {
                    const text = v === "1" ? "1.0000" : `0.${v}`;
                    return <td key={i}>{z === "3.6" ? <Marked>{text}</Marked> : text}</td>;
                  })}
                  {cells.length < 10 && <td colSpan={7} />}
                </ValueRow>
              );
            })}
          </tbody>
        </Values>
      </Sheet>
    </SheetArea>
    <Scroll $s={20}>
      <Svg w={20} h={24} vb="0 0 20 24"><path d="M5 15l5-6 5 6z" fill="#505050" /></Svg>
      <Thumb $len={50} $at={808} $c="#c1c1c1" />
      <Svg w={20} h={19} vb="0 0 20 19"><path d="M5 7l5 5 5-5z" fill="#a0a0a0" /></Svg>
    </Scroll>
  </Viewer>
);

/* ---------- file explorer ---------- */

const Window = styled.section`
  position: absolute;
  top: 261px;
  left: 829px;
  display: flex;
  flex-direction: column;
  width: 777px;
  height: 650px;
  background: #fff;
  border: 1px solid #9b9b9b;
  box-shadow: 0 8px 22px rgba(0, 0, 0, 0.4);
  color: #111;
  font-size: 14px;
`;
const Ribbon = styled.header`
  display: grid;
  grid-template-columns: 272px 111px 1fr;
  grid-template-rows: 37px 28px;
  border-bottom: 1px solid #dcdcdc;
`;
const QuickTools = styled.div`
  display: flex;
  align-items: center;
  padding-left: 5px;
`;
const Manage = styled.button`
  margin-top: 4px;
  background: #f0ee82;
  color: #4c4a1e;
  font-size: 13px;
`;
const Caption = styled.div`
  display: flex;
  align-items: center;
  padding-left: 12px;
`;
const RibbonTabs = styled.div`
  display: flex;
`;
const RibbonTab = styled.button`
  width: ${(p) => (p.$w ? `${p.$w}px` : "auto")};
  background: ${(p) => (p.$file ? "#02a68f" : "none")};
  color: ${(p) => (p.$file ? "#062e28" : "#333")};
  border: solid #ddd;
  border-width: ${(p) => (p.$sides ? "0 1px" : "0")};
  font-size: 13px;
`;
const RibbonEnd = styled.div`
  display: flex;
  align-items: center;
  justify-content: flex-end;
  padding-right: 2px;
`;
const NavRow = styled.div`
  display: flex;
  align-items: center;
  height: 50px;
  padding: 0 12px 2px 4px;
`;
const Crumbs = styled.div`
  display: flex;
  align-items: center;
  flex: 1;
  gap: 7px;
  height: 39px;
  padding-left: 4px;
  border: 1px solid #d9d9d9;
`;
const Refresh = styled.button`
  display: grid;
  place-items: center;
  width: 41px;
  height: 39px;
  border: 1px solid #d9d9d9;
  border-left: 0;
`;
const SearchBox = styled.label`
  display: flex;
  align-items: center;
  gap: 16px;
  width: 186px;
  height: 39px;
  margin-left: 12px;
  padding-left: 17px;
  border: 1px solid #d9d9d9;
  color: #777;
  input { width: 120px; }
  input::placeholder { color: #6d6d6d; opacity: 1; }
`;
const Panes = styled.div`
  display: flex;
  flex: 1;
  min-height: 0;
`;
const Tree = styled.nav`
  width: 168px;
  padding-top: 21px;
  overflow: hidden;
`;
const TreeItem = styled.button`
  display: flex;
  align-items: center;
  gap: 5px;
  width: 168px;
  height: 30px;
  margin-top: ${(p) => (p.$gap ? 10 : 0)}px;
  padding: 0 4px 0 ${(p) => (p.$sub ? 41 : 30)}px;
  background: ${(p) => (p.$active ? "#d9d9d9" : "none")};
  text-align: left;
`;
const PinMark = styled(Pin)`
  transform: rotate(45deg);
`;
const Listing = styled.div`
  display: flex;
  flex-direction: column;
  flex: 1;
  min-width: 0;
  margin-left: 3px;
  border-left: 1px solid #eee;
`;
const FileTable = styled.table`
  width: calc(100% - 18px);
  margin-left: 18px;
  border-collapse: collapse;
  table-layout: fixed;
  text-align: left;
  th { height: 33px; padding: 0 0 0 7px; font-weight: 400; color: #4c607a; border-right: 1px solid #e5e5e5; }
  th:last-child { border: 0; }
  td { height: 27px; padding: 0 0 0 7px; color: #6d6d6d; white-space: nowrap; }
`;
const FileRow = styled.tr`
  ${(p) => p.$selected && css`
    background: #cce8ff;
    outline: 1px solid #99d1ff;
    outline-offset: -1px;
  `}
`;
const Spacer = styled.tr`
  td { height: 9px; }
`;
const NameCell = styled.span`
  display: flex;
  align-items: center;
  gap: 6px;
  color: #111;
`;
const SortHead = styled.span`
  display: flex;
  justify-content: space-between;
  svg { margin: -4px 156px 0 0; }
`;
const Status = styled.footer`
  display: flex;
  align-items: center;
  gap: 12px;
  height: 31px;
  padding: 0 5px 0 17px;
  color: #1e395b;
`;
const ViewButton = styled.button`
  display: grid;
  place-items: center;
  width: 28px;
  height: 29px;
  background: ${(p) => (p.$on ? "#cbe8f6" : "none")};
  border: 1px solid ${(p) => (p.$on ? "#26a0da" : "transparent")};
`;

const tree = [
  [<QuickStar />, "Quick access"],
  [<DesktopIcon />, "Desktop", "sub pin"], [<DownIcon />, "Downloads", "sub pin"], [<PhotoIcon />, "Pictures", "sub pin"], [<OneDriveIcon />, "OneDrive", "sub pin"],
  [<FolderTall />, "Creative Cloud Fi", "gap"], [<OneDriveIcon />, "OneDrive", "gap"], [<PcIcon />, "This PC", "gap"],
  [<CubeIcon />, "3D Objects", "sub"], [<DesktopIcon />, "Desktop", "sub"], [<DocIcon />, "Documents", "sub"], [<DownIcon />, "Downloads", "sub"],
  [<MusicIcon />, "Music", "sub"], [<PhotoIcon />, "Pictures", "sub active"], [<VideoIcon />, "Videos", "sub"],
];
const files = [
  ["Camera Roll", "29/08/2020 19:10"], ["Capturas de pantalla", "13/03/2020 23:28"], ["Saved Pictures", "10/08/2020 15:04"], ["Screenshots", "28/10/2020 09:32"],
];

function Explorer() {
  return (
    <Window>
      <Ribbon>
        <QuickTools>
          <IconButton $w={26} aria-label="Window menu"><PhotoIcon /></IconButton><Divider $w={6} $c="#999" />
          <IconButton $w={40} aria-label="Properties"><Svg w={18}><path d="M3 1h10l4 4v14H3z" fill="#fff" stroke="#888" /><path d="M6 10l3 4 5-7" stroke="#e8591c" strokeWidth="2" /></Svg></IconButton>
          <IconButton $w={10} aria-label="New folder"><FolderTall /></IconButton>
          <IconButton $w={34} aria-label="Customise"><Svg w={8} h={8} vb="0 0 8 8"><path d="M0 1h8" stroke="#111" /><path d="M0 3h8L4 7z" fill="#111" /></Svg></IconButton>
          <Divider $c="#999" />
        </QuickTools>
        <Manage>Manage</Manage>
        <Caption>
          <Grow>Pictures</Grow>
          <IconButton $w={58} $c="#111" aria-label="Minimise"><Minus size={16} strokeWidth={1.3} /></IconButton>
          <IconButton $w={58} $c="#111" aria-label="Maximise"><Square size={15} strokeWidth={1.5} /></IconButton>
          <IconButton $w={60} $c="#111" aria-label="Close"><X size={18} strokeWidth={1.3} /></IconButton>
        </Caption>
        <RibbonTabs>
          <RibbonTab $w={70} $file>File</RibbonTab><RibbonTab $w={69}>Home</RibbonTab><RibbonTab $w={69}>Share</RibbonTab><RibbonTab $w={63}>View</RibbonTab>
        </RibbonTabs>
        <RibbonTab $sides>Picture Tools</RibbonTab>
        <RibbonEnd>
          <IconButton $w={26} $c="#aaa" aria-label="Collapse ribbon"><ChevronDown size={18} strokeWidth={1.5} /></IconButton>
          <IconButton $w={24} aria-label="Help"><LetterBox $bg="#0a6ccc" $r={10} $fs={15} $w={400}>?</LetterBox></IconButton>
        </RibbonEnd>
      </Ribbon>
      <NavRow>
        <IconButton $w={38} $c="#666" aria-label="Back"><ArrowLeft size={18} /></IconButton>
        <IconButton $w={38} $c="#ccc" aria-label="Forward"><ArrowRight size={18} /></IconButton>
        <IconButton $w={22} $c="#777" aria-label="Recent"><ChevronDown size={12} strokeWidth={3} /></IconButton>
        <IconButton $w={35} $c="#666" aria-label="Up"><ArrowUp size={18} /></IconButton>
        <Crumbs>
          <PhotoIcon /><ChevronRight size={12} color="#777" strokeWidth={3} /><PlainButton>This PC</PlainButton>
          <ChevronRight size={12} color="#777" strokeWidth={3} /><PlainButton>Pictures</PlainButton><ChevronRight size={12} color="#777" strokeWidth={3} />
          <Controls><IconButton $w={36} $c="#666" aria-label="History"><ChevronDown size={15} /></IconButton></Controls>
        </Crumbs>
        <Refresh aria-label="Refresh"><ReloadIcon c="#666" s={15} sw={2.5} /></Refresh>
        <SearchBox><Svg w={18}><circle cx="12" cy="8" r="6" stroke="#777" strokeWidth="1.300" /><path d="M8 12l-7 7" stroke="#777" strokeWidth="1.300" /></Svg><input aria-label="Search Pictures" placeholder="Search Pictures" /></SearchBox>
      </NavRow>
      <Panes>
        <Tree>
          {tree.map(([icon, label, f = ""], i) => (
            <TreeItem key={i} $sub={f.includes("sub")} $gap={f.includes("gap")} $active={f.includes("active")}>
              {icon}<Grow>{label}</Grow>{f.includes("pin") && <PinMark size={16} fill="#8e99a3" color="#8e99a3" />}
            </TreeItem>
          ))}
        </Tree>
        <Scroll $s={20}><ChevronUp size={15} /><Thumb $len={301} $at={6} /><ChevronDown size={15} /></Scroll>
        <Listing>
          <FileTable>
            <colgroup><col width="322" /><col width="100" /><col /></colgroup>
            <thead><tr><th><SortHead>Name<ChevronUp size={13} color="#777" /></SortHead></th><th>Status</th><th>Date modified</th></tr></thead>
            <tbody>
              <Spacer><td colSpan={3} /></Spacer>
              {files.map(([n, d]) => (
                <FileRow key={n} $selected={n === "Screenshots"}><td><NameCell><FolderTall />{n}</NameCell></td><td /><td>{d}</td></FileRow>
              ))}
            </tbody>
          </FileTable>
          <Grow as="div" />
          <Scroll $row $s={19}><ChevronLeft size={16} /><Thumb $row $len={368} $at={5} /><ChevronRight size={16} /></Scroll>
        </Listing>
      </Panes>
      <Status>
        <span>4 items</span><Divider $c="#e5e5e5" /><span>1 item selected</span><Divider $c="#e5e5e5" />
        <Controls>
          <ViewButton $on aria-label="Details"><Svg w={18} vb="0 0 18 18"><path d="M1 1h5v16H1z" fill="#fff" stroke="#777" /><path d="M8 4h10M8 9h10M8 14h10" stroke="#777" strokeDasharray="4 1" /></Svg></ViewButton>
          <ViewButton aria-label="Thumbnails"><PhotoIcon /></ViewButton>
        </Controls>
      </Status>
    </Window>
  );
}

/* ---------- taskbars ---------- */

const Taskbar = styled.footer`
  display: flex;
  height: 50px;
  flex: none;
  background: #020203;
  color: #fff;
  font-size: 14px;
`;
const Task = styled.button`
  display: flex;
  align-items: center;
  justify-content: ${(p) => (p.$wide ? "flex-start" : "center")};
  gap: 5px;
  width: ${(p) => p.$wide || p.$w || 62}px;
  height: 50px;
  padding-left: ${(p) => (p.$wide ? (p.$active ? 14 : 8) : 0)}px;
  margin: 0 ${(p) => p.$m || 0}px;
  background: ${(p) => (p.$active ? "#353537" : "none")};
  box-shadow: ${(p) => (p.$open ? "inset 0 -3px #62ddd0" : "none")};
  white-space: nowrap;
`;
const TaskGroup = styled.div`
  display: flex;
`;
const Stretch = styled.span`
  flex: ${(p) => p.$n};
`;
const IconSlot = styled.span`
  display: grid;
  place-items: center;
  width: 30px;
`;
const Clock = styled.time`
  width: 96px;
  margin-left: ${(p) => (p.$push ? "auto" : 0)};
  padding: 2px 0;
  line-height: 23px;
  text-align: center;
`;
const Language = styled.button`
  width: 44px;
`;
const Notice = styled.button`
  position: relative;
  display: grid;
  place-items: center;
  width: 44px;
`;
const Badge = styled.span`
  position: absolute;
  left: 22px;
  top: 25px;
  display: grid;
  place-items: center;
  width: 20px;
  height: 20px;
  border-radius: 50%;
  border: 1px solid #888;
  background: #333;
  font-size: 11px;
`;

const spot = <FaSpotify size={27} color="#1ed760" />;

export default function App() {
  return (
    <Desktop>
      <Global />
      <Screen>
        <Chrome
          back
          trailing
          tabs={[
            { title: "Tuits més recents / Twitter", icon: <FaTwitter size={18} color="#1da1f2" /> },
            { title: "Meet: irg-zwiv-nri", icon: <MeetIcon />, sound: true, active: true },
            { title: "Formulari.pdf", icon: <PdfIcon /> },
          ]}
          address={
            <Address $gap={18} $fs={19}>
              <Lock size={20} strokeWidth={1.5} />
              <UrlInput $tinted aria-label="Address" defaultValue="https://meet.google.com/irg-zwiv-nri?pli=1&authuser=1" />
              <Star size={20} strokeWidth={1.3} color="#999" />
            </Address>
          }
        >
          <Call>
            <CallHeader>
              <Presenter><LetterBox $s={45} $r={23} $bg="#ab47bc" $fs={24} $w={400}>K</LetterBox>Klaus Langohr està presentant</Presenter>
              <People>
                <LetterBox $s={40} $r={20} $bg="#78909c" $fs={21} $w={400}>S</LetterBox>
                <span>Sílvia Andreu Ló...<br />i 42 més</span>
              </People>
              <CallTools>
                <CallTool $w={90} aria-label="People"><PeopleIcon /><Count>45</Count></CallTool>
                <Divider $h={30} $c="#e0e0e0" />
                <CallTool $w={90} aria-label="Chat"><ChatIcon /><ChatDot /></CallTool>
                <Divider $h={30} $c="#e0e0e0" />
                <CallTool $w={94} $fs={23}>9:36</CallTool>
                <Self>
                  <SelfName>Tu</SelfName>
                  <LetterBox $s={38} $r={19} $bg="#c2185b" $fs={20} $w={400}>R</LetterBox>
                  <SelfMic><MicOff size={14} /></SelfMic>
                </Self>
              </CallTools>
            </CallHeader>
            <SharedScreen />
          </Call>
        </Chrome>
        <Taskbar>
          <Task aria-label="Start"><FaWindows size={19} /></Task>
          <Task aria-label="Firefox"><FirefoxIcon /></Task>
          <Task $wide={190} $m={7} $open><IconSlot><EdgeIcon /></IconSlot>Meet: irg-zwiv-nri a...</Task>
          <Task $wide={190} $m={3} $open><IconSlot><EdgeIcon /></IconSlot>Taules.pdf and 1 m...</Task>
          <Task $wide={200} $m={3} $active $open><IconSlot><FolderPhotoIcon /></IconSlot>Pictures</Task>
          <Task $w={60} aria-label="Word"><WordIcon /></Task>
          <Task $wide={190} $m={5} $open><IconSlot>{spot}</IconSlot>Spotify Free</Task>
          <Task aria-label="Control panel"><PanelIcon /></Task>
          <Task aria-label="Sticky notes"><StickyIcon /></Task>
          <Task aria-label="Settings"><GearIcon /></Task>
          <Task aria-label="Code"><CodeIcon /></Task>
          <Task $wide={190} $m={5} $open><IconSlot><CalcIcon /></IconSlot>Calculator</Task>
          <Clock $push>09:36:47<br />28/10/2020</Clock>
        </Taskbar>
      </Screen>
      <Screen>
        <Chrome
          tabs={[
            { title: "PE B3.pdf", icon: <PdfIcon /> },
            { title: "Taules.pdf", icon: <PdfIcon />, active: true },
          ]}
          address={
            <Address $gap={9} $fs={18}>
              <Info size={20} strokeWidth={1.3} /><span>File</span><Divider $h={20} $c="#888" $w={9} />
              <UrlInput aria-label="Address" defaultValue="C:/Users/rguix/OneDrive/FIB/Q3/PE/Taules.pdf" />
              <Star size={20} strokeWidth={1.3} color="#999" />
            </Address>
          }
        >
          <PdfPage />
        </Chrome>
        <Taskbar>
          <Task aria-label="Start"><FaWindows size={19} /></Task>
          <Stretch $n={15} />
          <TaskGroup>
            <Task aria-label="Firefox"><FirefoxIcon /></Task>
            <Task $w={52} $m={5} $open aria-label="Edge"><EdgeIcon /></Task>
            <Task $active $open aria-label="File Explorer"><ExplorerIcon /></Task>
            <Task aria-label="Word"><WordIcon /></Task>
            <Task $w={52} $m={5} $open aria-label="Spotify">{spot}</Task>
            <Task aria-label="Control panel"><PanelIcon /></Task>
            <Task aria-label="Sticky notes"><StickyIcon /></Task>
            <Task aria-label="Settings"><GearIcon /></Task>
            <Task aria-label="Code"><CodeIcon /></Task>
            <Task $w={52} $m={5} $open aria-label="Calculator"><CalcIcon /></Task>
          </TaskGroup>
          <Stretch $n={8} />
          <TaskGroup>
            {[
              ["Hidden icons", <ChevronUp size={20} strokeWidth={1.5} />], ["Graphics", <NvidiaIcon />], ["OneDrive", <CloudIcon />], ["Alerts", <RedXIcon />],
              ["Spotify", <FaSpotify size={19} color="#1ed760" />], ["Volume", <Volume2 size={20} strokeWidth={1.3} />], ["Network", <Monitor size={20} strokeWidth={1.3} />],
            ].map(([n, icon]) => <Task key={n} $w={30} aria-label={n}>{icon}</Task>)}
            <Language>ESP</Language>
            <Clock>09:36:47<br />28/10/2020</Clock>
            <Notice aria-label="Notifications"><NoteIcon /><Badge>3</Badge></Notice>
            <Divider $w={20} $h={50} $c="#444" />
          </TaskGroup>
        </Taskbar>
        <Explorer />
      </Screen>
    </Desktop>
  );
}
